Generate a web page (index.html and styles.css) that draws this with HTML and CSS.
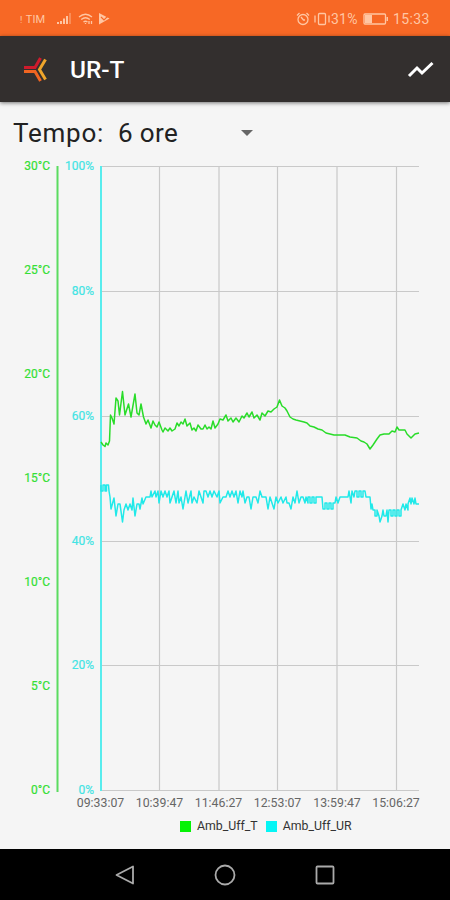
FILE: index.html
```html
<!DOCTYPE html>
<html lang="it">
<head>
<meta charset="utf-8">
<title>UR-T</title>
<link rel="stylesheet" href="styles.css">
</head>
<body>
<div class="screen">
  <header class="status">
    <div class="status-left">
      <span class="carrier"><i>!</i> TIM</span>
      <svg class="signal" width="14" height="12" viewBox="0 0 14 12"><path d="M1 9v2M4 8v3M7 5.500v5.500M10 3v8"/><path class="dim" d="M13 0v11"/></svg>
      <svg class="wifi" width="16" height="12" viewBox="0 0 16 12"><path d="M1 4Q7.500-1.500 14 4M3.200 6.500Q7.500 3 11.800 6.500M5.500 9q2-1.500 4 0"/><path d="M7.500 10v1M11 8v3M13.500 8v3"/></svg>
      <svg class="play" width="12" height="12" viewBox="0 0 12 12"><path d="M1 0 11.500 5.500 1 11.500Z"/><path class="cut" d="m3 4 3 3 5-5"/></svg>
    </div>
    <div class="status-right">
      <svg class="alarm" width="14" height="14" viewBox="0 0 14 14"><circle cx="7" cy="7.500" r="5"/><path d="M1 3.500 3.500 1M10.500 1 13 3.500M5 5l2.500 3H9"/></svg>
      <svg class="vibrate" width="18" height="14" viewBox="0 0 18 14"><rect x="5.500" y="1.500" width="7" height="11" rx="1"/><path d="M2 3.500v7M16 3.500v7"/></svg>
      <span class="percent">31%</span>
      <svg class="battery" width="26" height="12" viewBox="0 0 26 12"><rect x="1" y="1" width="21.500" height="10" rx="1"/><path class="fill" d="M2 2h7v8H2zM23.500 4H25v4h-1.500z"/></svg>
      <span class="clock">15:33</span>
    </div>
  </header>
  <nav class="appbar">
    <svg class="logo" width="26" height="28" viewBox="0 0 26 28">
      <path class="red" d="M1 11.500H12L17.500 2"/>
      <path class="orange" d="M1 15.500H12L17.500 25"/>
      <path class="yellow" d="M22.500 3.500 16.500 13.500 22.500 23.500"/>
    </svg>
    <h1>UR-T</h1>
    <svg class="trend" width="28" height="20" viewBox="0 0 28 20"><path d="m2 16 8-8 5 5L25.500 3"/></svg>
  </nav>
  <main>
    <div class="period">
      <span class="label">Tempo:</span>
      <span class="value">6 ore</span>
      <span class="caret"></span>
    </div>
    <svg class="chart" width="450" height="656" viewBox="0 157 450 656">
      <path class="grid" d="M101 166.500H419M101 291.500H419M101 416.500H419M101 541.500H419M101 665.500H419M101 790.500H419M159.500 166V791M219 166V791M277.500 166V791M337 166V791M396.500 166V791"/>
      <g class="axis temp">
        <path d="M57.500 166V792"/>
        <text x="50" y="170">30°C</text><text x="50" y="274">25°C</text><text x="50" y="378">20°C</text><text x="50" y="482">15°C</text><text x="50" y="586">10°C</text><text x="50" y="690">5°C</text><text x="50" y="794">0°C</text>
      </g>
      <g class="axis hum">
        <path d="M101 166V791"/>
        <text x="94" y="170">100%</text><text x="94" y="295">80%</text><text x="94" y="420">60%</text><text x="94" y="545">40%</text><text x="94" y="669">20%</text><text x="94" y="794">0%</text>
      </g>
      <g class="times">
        <text x="100.500" y="807">09:33:07</text><text x="159.500" y="807">10:39:47</text><text x="218.500" y="807">11:46:27</text><text x="277.500" y="807">12:53:07</text><text x="337" y="807">13:59:47</text><text x="396" y="807">15:06:27</text>
      </g>
      <polyline class="series temp-line" points="101,442 103,445 105,446.500 106,443 108,445 109.500,441 110.500,415 112,418 114,424 116,398 118,401 119.500,415 122.500,391.500 125,415 128.500,404 131,417 135,394 137,413 139,415 141,404 143.500,417 146,424 148,420 151,428 153,421 155,425 157,427 159,422 162,430 163,432 165,428 168,431 170,428 172,431 175,429 177,423 179,426 181,422 183,424 185,419 187,426 190,423 192,430 194,428 196,431 198,425 201,429 203,429 205,425 207,429 209,427 211,429 213,421 215,428 218,424 220,419 223,420 226,415 228,421 231,418 233,422 236,418 239,422 242,416 244,418 247,413 249,417 252,412 254,418 257,415 260,420 262,413 265,416 268,411 271,412 274,409 277,407 279.500,400 282,406 285,408 287,411 290,417 293,419 296,420 300,421 304,422 307,423 310,426 314,427 318,429 322,430 326,433 330,434 334,435 345,435 350,437 357,438 361,441 364,442 367,444 370,449 373,445 377,439 380,435 384,434 389,434 392,431 395,432 397,427 399,430 405,430 407,434 411,438 415,434 419,433"/>
      <polyline class="series hum-line" points="101,485 101,491 103,491 103,485 105,485 105,491 106.500,491 106.500,485 108.500,485 109,491 110,497 111,509 114,498 116,516 118,504 120,504 122.500,522 124,510 126,504 128,510 130,504 132,510 133,498 135,516 137,504 139,504 140,509 142,498 143,504 146,497 150,497 151,491 152,497 155,491 156,497 158,491 159,503 161,491 163,497 165,491 167,497 169,491 170,503 172,497 174,491 176,503 178,491 179,503 181,497 183,509 186,491 188,503 191,491 192,503 194,497 197,503 199,491 201,497 203,503 204,491 206,491 208,497 210,491 212,497 214,491 217,497 219,491 220,503 223,497 226,497 228,491 230,497 232,491 234,497 236,491 238,503 240,491 242,497 243,491 245,503 247,497 249,497 251,509 253,497 256,497 258,503 260,491 262,497 266,497 268,509 270,497 272,503 274,509 276,497 278,503 281,497 283,503 286,497 287,503 289,503 291,509 293,497 295,503 297,491 299,503 301,497 303,497 305,503 306,497 308,503 308,497 310,497 310,503 312,503 312,497 314,497 314,503 316,503 316,497 322,497 323,509 325,509 325,503 327,503 327,509 329,509 329,503 331,503 331,509 333,509 333,503 335,503 336,497 338,503 340,497 348,497 349,491 350,497 351,503 352,491 354,497 355,491 357,491 357,497 359,497 359,491 361,491 361,497 363,497 363,491 365,491 366,497 370,497 371,509 372,504 373,510 375,510 375,516 377,516 377,510 379,516 380,522 382,516 383,510 384,516 386,516 387,510 388,522 389,510 391,510 391,516 393,516 393,510 395,510 395,516 397,516 397,510 399,510 399,516 401,516 401,510 403,504 405,510 406,504 408,510 408,504 410,498 411,504 412,498 414,504 415,498 416,504 419,504"/>
    </svg>
    <div class="legend">
      <span class="item"><b class="swatch green"></b>Amb_Uff_T</span>
      <span class="item"><b class="swatch cyan"></b>Amb_Uff_UR</span>
    </div>
  </main>
  <footer class="sysnav">
    <svg width="22" height="22" viewBox="0 0 22 22"><path d="M19 2.500v17L2.500 11Z"/></svg>
    <svg width="22" height="22" viewBox="0 0 22 22"><circle cx="11" cy="11" r="9.500"/></svg>
    <svg width="22" height="22" viewBox="0 0 22 22"><rect x="2.500" y="2.500" width="17" height="17" rx="1"/></svg>
  </footer>
</div>
</body>
</html>
```

FILE: styles.css
```css
* { box-sizing: border-box; }
body { margin: 0; font-family: Roboto, sans-serif; background: #f5f5f5; }
svg { display: block; fill: none; flex: none; }
.screen { width: 450px; height: 900px; display: flex; flex-direction: column; overflow: hidden; }

.status { height: 36px; flex: none; background: #f76825; color: #ffc6a3; display: flex; justify-content: space-between; align-items: center; padding: 2px 20px 0 20px; }
.status svg { stroke: #ffc6a3; stroke-width: 1.3; }
.status-left, .status-right { display: flex; align-items: center; }
.carrier { font-size: 11px; width: 37px; white-space: nowrap; }
.carrier i { font-style: normal; font-size: 9px; margin-right: 1px; }
.status .signal { stroke-width: 2; }
.signal .dim { opacity: .4; }
.wifi { margin-left: 7px; }
.status .play { margin-left: 4px; fill: #ffc6a3; stroke: none; }
.status .play .cut { fill: none; stroke: #f76825; stroke-width: 1.2; }
.vibrate { margin-left: 3px; }
.percent { font-size: 14px; width: 31px; letter-spacing: .2px; }
.battery { margin-left: 1px; }
.status .battery .fill { fill: #ffc6a3; stroke: none; }
.clock { font-size: 14px; width: 37px; margin-left: 4px; letter-spacing: .4px; }

.appbar { position: relative; height: 66px; flex: none; background: #332f2e; display: flex; align-items: center; padding: 2px 15px 0 23px; box-shadow: 0 1px 4px #0008; }
.appbar h1 { margin: 0 auto 0 21px; font-size: 24.4px; line-height: 28px; font-weight: 500; color: #fff; }
.logo { stroke-width: 3; }
.red { stroke: #cf1b2c; }
.orange { stroke: #f06521; }
.yellow { stroke: #efa52b; }
.trend { stroke: #fff; stroke-width: 3; }

main { height: 747px; flex: none; background: #f5f5f5; }
.period { height: 55px; display: flex; align-items: center; padding: 6px 0 0 13px; font-size: 26px; color: #222; }
.label { width: 105px; letter-spacing: .75px; }
.value { width: 123px; letter-spacing: .4px; }
.caret { border: 6px solid transparent; border-top-color: #666; border-bottom: 0; }
.chart { font-size: 12px; }
.grid { stroke: #c9c9c9; stroke-width: 1.2; }
.axis path { stroke-width: 2; }
.axis text { text-anchor: end; }
.temp path { stroke: #5bdc60; }
.temp text { fill: #35df35; stroke: #35df35; stroke-width: .2; }
.hum path { stroke: #58eced; }
.hum text { fill: #43e4e4; stroke: #43e4e4; stroke-width: .2; }
.times text { fill: #666; text-anchor: middle; font-size: 12.3px; }
.series { stroke-width: 1.5; stroke-linejoin: round; }
.temp-line { stroke: #29dc29; }
.hum-line { stroke: #20e9e9; }
.legend { display: flex; gap: 8px; height: 26px; align-items: center; padding-left: 180px; font-size: 12.3px; color: #333; }
.item { display: flex; align-items: center; gap: 6px; white-space: nowrap; }
.swatch { width: 11px; height: 11px; }
.green { background: #05f205; }
.cyan { background: #05f5f5; }

.sysnav { height: 51px; flex: none; background: #000; display: flex; justify-content: center; align-items: center; gap: 78px; }
.sysnav svg { stroke: #aaa; stroke-width: 1.8; stroke-linejoin: round; }
```
